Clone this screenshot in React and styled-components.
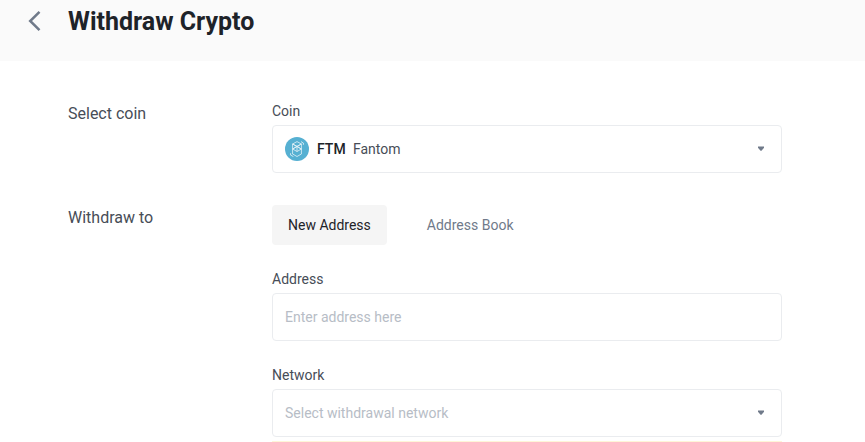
import React, { useState } from 'react';
import styled, { createGlobalStyle, ThemeProvider } from 'styled-components';

const theme = {
  colors: {
    title: '#1e2329',
    text: '#474d57',
    muted: '#707a8a',
    placeholder: '#b7bdc6',
    line: '#eaecef',
    header: '#fafafa',
    active: '#f5f5f5',
    notice: '#fef6d8',
    ftm: '#56b0d2',
  },
};

const GlobalStyle = createGlobalStyle`
  * {
    box-sizing: border-box;
  }
  body {
    margin: 0;
    background-color: #fff;
    color: ${props => props.theme.colors.text};
    font-family: Roboto, "Liberation Sans", sans-serif;
    font-size: 14px;
    line-height: 20px;
  }
  button, input, select {
    font: inherit;
  }
`;

const Header = styled.header`
  display: flex;
  align-items: flex-start;
  gap: 24px;
  height: 61px;
  padding: 5px 24px;
  background-color: ${props => props.theme.colors.header};
`;

const BackButton = styled.button`
  display: flex;
  align-items: center;
  justify-content: center;
  width: 20px;
  height: 32px;
  padding: 0;
  border: none;
  background: none;
  color: ${props => props.theme.colors.muted};
  cursor: pointer;
`;

const Title = styled.h1`
  margin: 0;
  color: ${props => props.theme.colors.title};
  font-size: 25px;
  font-weight: 700;
  line-height: 34px;
`;

const Form = styled.form`
  display: flex;
  flex-direction: column;
  gap: 32px;
  padding: 40px 68px 0;
`;

const Section = styled.section`
  display: grid;
  grid-template-columns: 204px minmax(0, 510px);
`;

const SectionTitle = styled.h2`
  margin: 0;
  font-size: 16px;
  font-weight: 400;
  line-height: 26px;
`;

const Fields = styled.div`
  display: flex;
  flex-direction: column;
  gap: 24px;
`;

const Field = styled.div`
  display: flex;
  flex-direction: column;
  gap: 4px;
`;

const Control = styled.div`
  display: grid;
  grid-template-columns: minmax(0, 1fr);
  align-items: center;
  height: 48px;

  > * {
    grid-area: 1 / 1;
  }
`;

const Input = styled.input`
  width: 100%;
  height: 48px;
  padding: 0 12px;
  border: 1px solid ${props => props.theme.colors.line};
  border-radius: 4px;
  background: #fff;
  color: ${props => props.theme.colors.title};
  outline: none;

  &::placeholder {
    color: ${props => props.theme.colors.placeholder};
    opacity: 1;
  }
`;

const Select = styled.select`
  width: 100%;
  height: 48px;
  padding: 0 40px 0 ${props => (props.$coin ? '80px' : '12px')};
  border: 1px solid ${props => props.theme.colors.line};
  border-radius: 4px;
  background: #fff;
  color: ${props => (props.$empty ? props.theme.colors.placeholder : props.theme.colors.text)};
  appearance: none;
  outline: none;
`;

const Coin = styled.span`
  display: flex;
  align-items: center;
  gap: 8px;
  padding-left: 13px;
  color: ${props => props.theme.colors.title};
  font-weight: 500;
  pointer-events: none;
`;

const Caret = styled.svg`
  justify-self: end;
  margin-right: 17px;
  fill: ${props => props.theme.colors.muted};
  pointer-events: none;
`;

const Tabs = styled.div`
  display: flex;
  gap: 24px;
`;

const Tab = styled.button`
  height: 40px;
  padding: 0 16px;
  border: none;
  border-radius: 4px;
  background-color: ${props => (props.$active ? props.theme.colors.active : 'transparent')};
  color: ${props => (props.$active ? props.theme.colors.title : props.theme.colors.muted)};
  cursor: pointer;
`;

const Notice = styled.div`
  border-top: 1px solid ${props => props.theme.colors.notice};
`;

const FantomIcon = () => (
  <svg width="24" height="24" viewBox="0 0 24 24" aria-hidden="true">
    <circle cx="12" cy="12" r="12" fill={theme.colors.ftm} />
    <g fill="none" stroke="#fff" strokeWidth="0.8" strokeLinejoin="round" opacity="0.85">
      <path d="M12 4.6 16.4 7v10L12 19.5 7.6 17V7z" />
      <path d="M7.6 7l4.4 2.4L16.4 7M7.6 12l4.4-2.6 4.4 2.6-4.4 2.5zM7.6 7l8.8 5M16.4 7l-8.8 5M12 9.4v5.1" />
      <path d="M5.6 16.2v1.9L8.4 19.6M18.4 7.8V6L16 4.6" />
    </g>
  </svg>
);

const ArrowDown = () => (
  <Caret width="8" height="6" viewBox="0 0 8 6" aria-hidden="true">
    <path d="M1 0.6h6v1.2L4.5 4.8h-1L1 1.8z" />
  </Caret>
);

const App = () => {
  const [coin, setCoin] = useState('FTM');
  const [tab, setTab] = useState('new');
  const [network, setNetwork] = useState('');

  return (
    <ThemeProvider theme={theme}>
      <GlobalStyle />
      <Header>
        <BackButton type="button" aria-label="Back">
          <svg width="14" height="22" viewBox="0 0 14 22" fill="none" stroke="currentColor" strokeWidth="2.5">
            <path d="M12.5 1.8 3.2 11l9.3 9.2" />
          </svg>
        </BackButton>
        <Title>Withdraw Crypto</Title>
      </Header>
      <Form>
        <Section>
          <SectionTitle>Select coin</SectionTitle>
          <Field>
            <label htmlFor="coin">Coin</label>
            <Control>
              <Select id="coin" $coin value={coin} onChange={e => setCoin(e.target.value)}>
                <option value="FTM">Fantom</option>
              </Select>
              <Coin>
                <FantomIcon />
                {coin}
              </Coin>
              <ArrowDown />
            </Control>
          </Field>
        </Section>
        <Section>
          <SectionTitle>Withdraw to</SectionTitle>
          <Fields>
            <Tabs>
              <Tab type="button" $active={tab === 'new'} onClick={() => setTab('new')}>New Address</Tab>
              <Tab type="button" $active={tab === 'book'} onClick={() => setTab('book')}>Address Book</Tab>
            </Tabs>
            <Field>
              <label htmlFor="address">Address</label>
              <Input id="address" type="text" placeholder="Enter address here" />
            </Field>
            <Field>
              <label htmlFor="network">Network</label>
              <Control>
                <Select id="network" $empty={!network} value={network} onChange={e => setNetwork(e.target.value)}>
                  <option value="">Select withdrawal network</option>
                </Select>
                <ArrowDown />
              </Control>
              <Notice />
            </Field>
          </Fields>
        </Section>
      </Form>
    </ThemeProvider>
  );
};

export default App;
